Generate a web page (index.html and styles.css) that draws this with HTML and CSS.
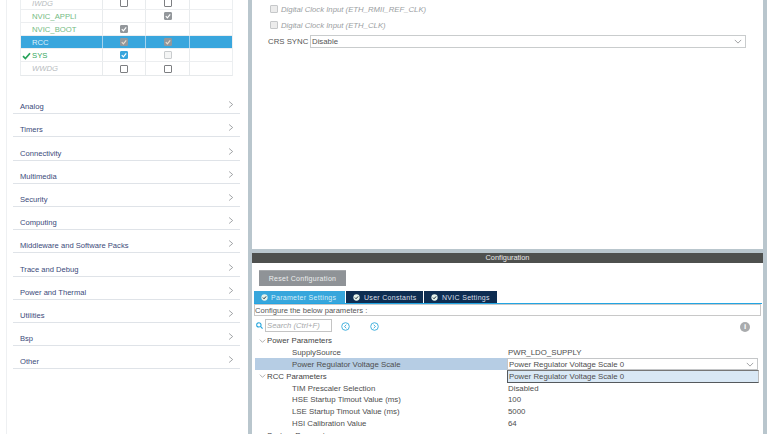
FILE: index.html
```html
<!DOCTYPE html>
<html>
<head>
<meta charset="utf-8">
<title>Pinout and Configuration</title>
<link rel="stylesheet" href="styles.css">
</head>
<body>
<svg class="defs" width="0" height="0"><defs>
  <symbol id="tick" viewBox="0 0 9 9"><path d="M2 4.6 3.8 6.5 7 2.6" fill="none" stroke="currentColor" stroke-width="1.3"/></symbol>
  <symbol id="chev" viewBox="0 0 8 10"><path d="M1.5 1 6.2 5 1.5 9" fill="none" stroke="currentColor" stroke-width="1"/></symbol>
  <symbol id="down" viewBox="0 0 10 6"><path d="M1 1 5 5 9 1" fill="none" stroke="currentColor" stroke-width="1"/></symbol>
  <symbol id="ok" viewBox="0 0 8 8"><circle cx="4" cy="4" r="3.6" fill="currentColor"/><path d="M2.2 4.1 3.5 5.4 5.8 2.8" fill="none" stroke="#123" stroke-width="1.1"/></symbol>
</defs></svg>
<div class="app">
  <aside class="left">
    <div class="ip-table">
      <div class="ip-row"><div class="name off">IWDG</div><div class="cell"><span class="cb"></span></div><div class="cell"><span class="cb"></span></div><div class="cell"></div></div>
      <div class="ip-row"><div class="name lit">NVIC_APPLI</div><div class="cell"></div><div class="cell"><span class="cb grey"><svg><use href="#tick"/></svg></span></div><div class="cell"></div></div>
      <div class="ip-row"><div class="name lit">NVIC_BOOT</div><div class="cell"><span class="cb grey"><svg><use href="#tick"/></svg></span></div><div class="cell"></div><div class="cell"></div></div>
      <div class="ip-row sel"><div class="name">RCC</div><div class="cell"><span class="cb greyrust"><svg><use href="#tick"/></svg></span></div><div class="cell"><span class="cb greyrust"><svg><use href="#tick"/></svg></span></div><div class="cell"></div></div>
      <div class="ip-row"><div class="name on"><svg class="okmark" viewBox="0 0 9 8"><path d="M1 4.2 3.4 6.6 8 1.2" fill="none" stroke="#27a35a" stroke-width="1.7"/></svg>SYS</div><div class="cell"><span class="cb blue"><svg><use href="#tick"/></svg></span></div><div class="cell"><span class="cb faint"></span></div><div class="cell"></div></div>
      <div class="ip-row"><div class="name off">WWDG</div><div class="cell"><span class="cb"></span></div><div class="cell"><span class="cb"></span></div><div class="cell"></div></div>
    </div>
    <nav class="cats">
      <div class="cat"><span>Analog</span><svg class="chev"><use href="#chev"/></svg></div>
      <div class="cat"><span>Timers</span><svg class="chev"><use href="#chev"/></svg></div>
      <div class="cat"><span>Connectivity</span><svg class="chev"><use href="#chev"/></svg></div>
      <div class="cat"><span>Multimedia</span><svg class="chev"><use href="#chev"/></svg></div>
      <div class="cat"><span>Security</span><svg class="chev"><use href="#chev"/></svg></div>
      <div class="cat"><span>Computing</span><svg class="chev"><use href="#chev"/></svg></div>
      <div class="cat"><span>Middleware and Software Packs</span><svg class="chev"><use href="#chev"/></svg></div>
      <div class="cat"><span>Trace and Debug</span><svg class="chev"><use href="#chev"/></svg></div>
      <div class="cat"><span>Power and Thermal</span><svg class="chev"><use href="#chev"/></svg></div>
      <div class="cat"><span>Utilities</span><svg class="chev"><use href="#chev"/></svg></div>
      <div class="cat"><span>Bsp</span><svg class="chev"><use href="#chev"/></svg></div>
      <div class="cat"><span>Other</span><svg class="chev"><use href="#chev"/></svg></div>
    </nav>
  </aside>
  <main class="center">
    <section class="mode">
      <label class="dis"><span class="cb2"></span>Digital Clock Input (ETH_RMII_REF_CLK)</label>
      <label class="dis"><span class="cb2"></span>Digital Clock Input (ETH_CLK)</label>
      <div class="crs"><span>CRS SYNC</span><div class="select"><span>Disable</span><svg class="down"><use href="#down"/></svg></div></div>
    </section>
    <section class="config">
      <div class="title">Configuration</div>
      <button class="reset">Reset Configuration</button>
      <div class="tabs">
        <div class="tab active"><svg class="ok"><use href="#ok"/></svg>Parameter Settings</div>
        <div class="tab t2"><svg class="ok"><use href="#ok"/></svg>User Constants</div>
        <div class="tab t3"><svg class="ok"><use href="#ok"/></svg>NVIC Settings</div>
      </div>
      <div class="below">Configure the below parameters :</div>
      <div class="search">
        <svg class="glass" viewBox="0 0 8 8"><circle cx="3.3" cy="3.3" r="2.5" fill="none" stroke="#1fa3dc" stroke-width="1.2"/><path d="M5.1 5.1 7.5 7.5" stroke="#1fa3dc" stroke-width="1.3"/></svg>
        <div class="sinput">Search (Ctrl+F)</div>
        <svg class="nav n1" viewBox="0 0 9 9"><circle cx="4.5" cy="4.5" r="3.8" fill="none" stroke="#45b2de"/><path d="M5.3 2.8 3.5 4.5 5.3 6.2" fill="none" stroke="#45b2de"/></svg>
        <svg class="nav n2" viewBox="0 0 9 9"><circle cx="4.5" cy="4.5" r="3.8" fill="none" stroke="#45b2de"/><path d="M3.7 2.8 5.5 4.5 3.7 6.2" fill="none" stroke="#45b2de"/></svg>
        <div class="info">i</div>
      </div>
      <div class="tree">
        <div class="row group"><svg class="tw"><use href="#down"/></svg>Power Parameters</div>
        <div class="row"><span class="k">SupplySource</span><span class="v">PWR_LDO_SUPPLY</span></div>
        <div class="row hl"><span class="k">Power Regulator Voltage Scale</span><div class="v edit"><span>Power Regulator Voltage Scale 0</span><svg class="down"><use href="#down"/></svg></div>
          <div class="popup">Power Regulator Voltage Scale 0</div>
        </div>
        <div class="row group"><svg class="tw"><use href="#down"/></svg>RCC Parameters</div>
        <div class="row"><span class="k">TIM Prescaler Selection</span><span class="v">Disabled</span></div>
        <div class="row"><span class="k">HSE Startup Timout Value (ms)</span><span class="v">100</span></div>
        <div class="row"><span class="k">LSE Startup Timout Value (ms)</span><span class="v">5000</span></div>
        <div class="row"><span class="k">HSI Calibration Value</span><span class="v">64</span></div>
        <div class="row group"><svg class="tw"><use href="#down"/></svg>System Parameters</div>
      </div>
    </section>
  </main>
  <div class="rightpane"></div>
</div>
</body>
</html>
```

FILE: styles.css
```css
* { box-sizing: border-box; }
html, body { margin: 0; height: 100%; overflow: hidden; background: #fff; }
body { font-family: "Liberation Sans", Arial, sans-serif; font-size: 7.8px; color: #444; white-space: nowrap; }
.defs { position: absolute; }
.app { display: flex; width: 780px; height: 434px; overflow: hidden; }

.left { width: 242px; flex: none; margin-left: 6px; border-left: 1px solid #eef0f2; }
.ip-table { margin: -3px 14px 0 13px; width: 213px; border-left: 1px solid #eceff1; border-right: 1px solid #eceff1; border-bottom: 1px solid #e6e9eb; }
.ip-row { display: grid; grid-template-columns: 82px 43px 44px 1fr; height: 13px; border-bottom: 1px solid #eceef0; }
.ip-row:last-child { border-bottom: 0; }
.name { display: flex; align-items: center; padding-left: 11px; font-size: 7.7px; color: #35a860; position: relative; border-right: 1px solid #e8ebed; }
.cell { display: flex; align-items: center; justify-content: center; border-right: 1px solid #e8ebed; }
.cell:last-child { border-right: 0; }
.name.off { color: #b8bcc0; font-style: italic; }
.name.lit { color: #74bb83; }
.okmark { position: absolute; left: 1px; top: 3px; width: 9px; height: 8px; }
.ip-row.sel { background: #39a6dd; }
.ip-row.sel .name { color: #dff1fb; border-right-color: #a5d3ee; }
.ip-row.sel .cell { border-right-color: #a5d3ee; }
.cb { display: block; width: 8px; height: 8px; border: 1px solid #7d7f82; background: #fff; border-radius: 1px; }
.cb svg { display: block; width: 8px; height: 8px; margin: -1px 0 0 -1px; color: #fff; }
.cb.grey, .cb.greyrust { background: #93979b; border-color: #93979b; }
.cb.greyrust svg { color: #e8ddd0; }
.cb.blue { background: #39a6dd; border-color: #39a6dd; }
.cb.faint { border-color: #c9ccce; background: #f4f5f5; }

.cats { margin: 15px 8px 0 6px; }
.cat { display: flex; align-items: flex-end; justify-content: space-between; height: 23.2px; padding: 0 6px 2px 7px; border-bottom: 1.2px solid #dfe3e8; color: #3b4a7a; font-size: 7.6px; }
.chev { width: 6px; height: 9px; color: #85888c; margin-bottom: 2px; }

.center { width: 515px; flex: none; display: flex; flex-direction: column; border-left: 4px solid #b9c6cd; }
.rightpane { width: 4px; flex: none; background: #b9c6cd; }

.mode { height: 249px; padding: 1px 0 0 18px; display: flex; flex-direction: column; }
.dis { display: flex; align-items: center; height: 16px; color: #9a9ea2; font-style: italic; font-size: 7.75px; }
.cb2 { width: 8px; height: 8px; margin-right: 3px; background: #ececec; border: 1px solid #c6c8ca; border-radius: 1px; }
.crs { display: flex; align-items: center; margin: 2px 0 0 -2px; height: 13px; color: #555; font-size: 7.8px; }
.crs > span { width: 42px; flex: none; }
.select { width: 436px; height: 13px; border: 1px solid #c9cccd; display: flex; align-items: center; justify-content: space-between; padding: 0 3px 0 1px; }
.down { width: 8px; height: 5px; color: #8b8e91; }

.config { flex: 1; border-top: 4px solid #b9c6cd; min-height: 0; }
.title { height: 10px; background: #4e504e; color: #e9e9e9; text-align: center; line-height: 10px; font-size: 7.4px; }
.reset { display: block; width: 87px; height: 16px; margin: 7px 0 5px 7px; background: #8f9397; border: 0; border-top: 1px solid #a5a8ab; color: #eceded; font: 7px "Liberation Sans", Arial, sans-serif; letter-spacing: .3px; padding: 0; }
.tabs { display: flex; height: 13px; margin-left: 2px; border-bottom: 1px solid #22a5e3; width: 508px; }
.tab { display: flex; align-items: center; height: 12px; background: #0e2d52; color: #d8dee6; font-size: 7px; padding-left: 7px; letter-spacing: .3px; margin-right: 1px; }
.tab.active { width: 91px; background: #37a6dc; color: #d6eef9; }
.tab.t2 { width: 77px; }
.tab.t3 { width: 73px; }
.ok { width: 7px; height: 7px; margin-right: 4px; flex: none; color: #e6f2ea; }
.tab.active .ok { margin-right: 3px; }
.below { width: 507px; height: 12px; margin-left: 2px; border: 1px solid #c8c8c8; line-height: 11px; color: #555; font-size: 7.6px; }
.search { position: relative; display: flex; align-items: center; height: 13px; margin-top: 3px; padding-left: 4px; }
.glass { width: 7px; height: 7px; margin-right: 2px; }
.sinput { width: 67px; height: 13px; border: 1px solid #c4c4c4; color: #a6a8aa; font-style: italic; padding-left: 1px; line-height: 11px; font-size: 7.7px; }
.nav { width: 9px; height: 9px; margin: 1px 0 0 9px; }
.nav.n2 { margin-left: 20px; }
.info { margin: 2px 13px 0 auto; width: 10px; height: 10px; border-radius: 50%; background: #a9abad; color: #fff; text-align: center; line-height: 10px; font-size: 8px; font-weight: bold; }
.tree { margin-top: 2.5px; }
.row { position: relative; display: flex; height: 11.9px; align-items: center; padding-left: 40px; color: #4e4e4e; font-size: 7.85px; }
.row.group { padding-left: 15px; color: #444; }
.tw { position: absolute; left: 7px; top: 4px; width: 7px; height: 4px; color: #888; }
.k { width: 216px; flex: none; position: relative; }
.row.hl::before { content: ""; position: absolute; left: 3px; width: 252px; top: 0; bottom: 0; background: #b6cde4; }
.edit { position: absolute; left: 255px; top: 0; width: 251px; height: 12px; border: 1px solid #c4c6c8; display: flex; align-items: center; justify-content: space-between; padding: 0 3px 0 1px; background: #fff; }
.popup { position: absolute; left: 255px; top: 12px; width: 252px; height: 13px; background: #d9e8f5; border: 1px solid #55595d; border-top-color: #777; border-right-color: #bbb; line-height: 11px; padding-left: 1px; z-index: 2; }
```
